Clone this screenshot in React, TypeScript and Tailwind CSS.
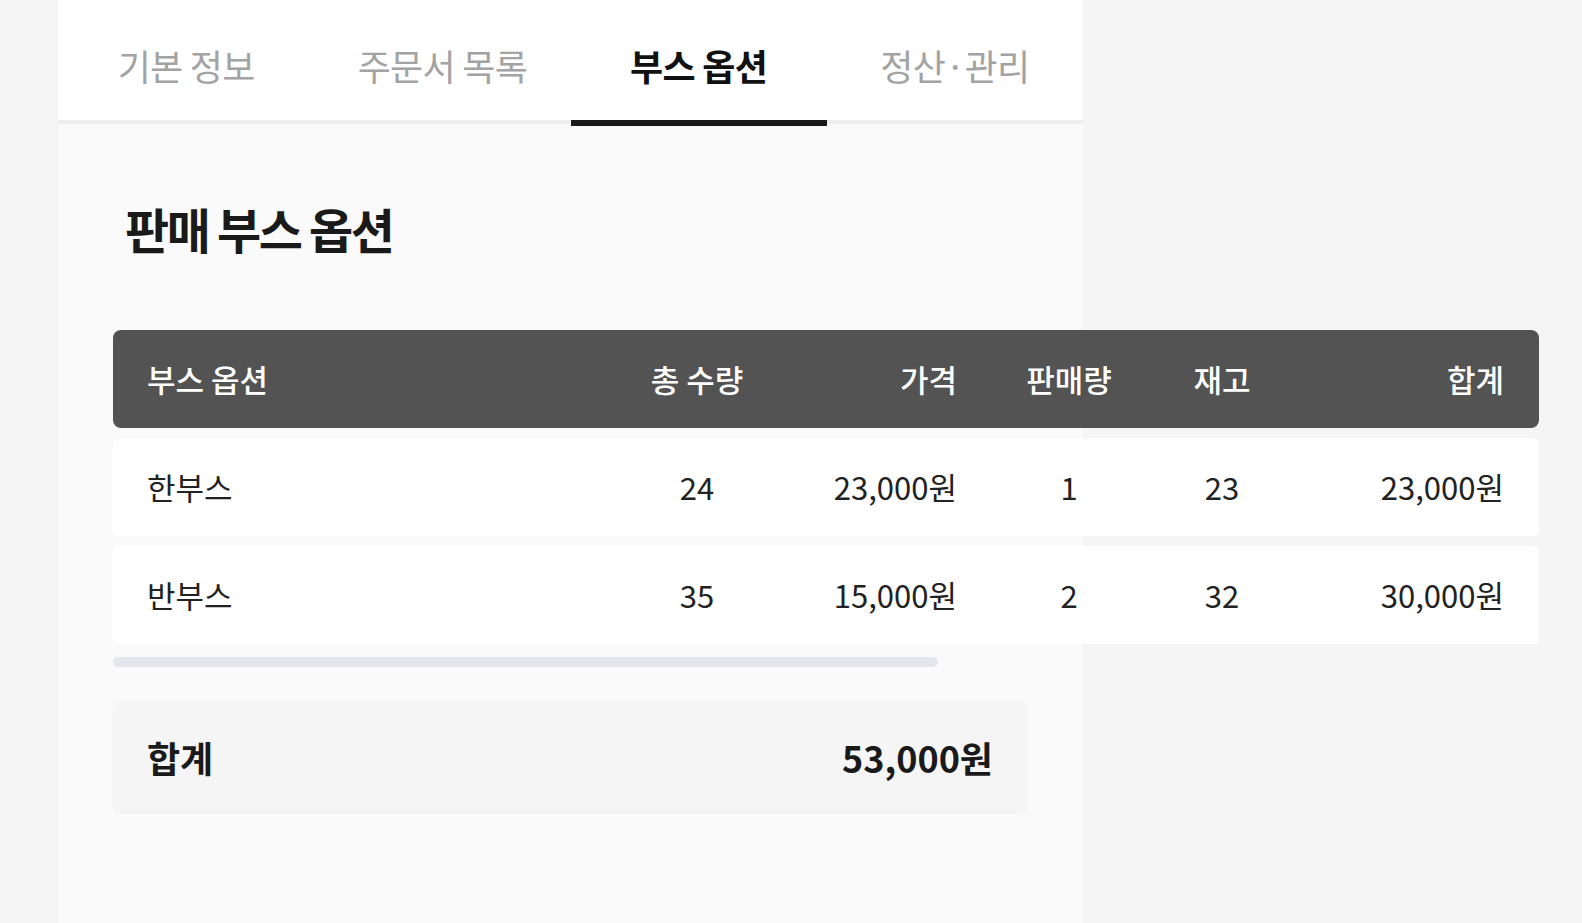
import React from 'react';

const tabs = ['기본 정보', '주문서 목록', '부스 옵션', '정산·관리'];

const rows = [
  { name: '한부스', total: 24, price: '23,000원', sold: 1, stock: 23, sum: '23,000원' },
  { name: '반부스', total: 35, price: '15,000원', sold: 2, stock: 32, sum: '30,000원' },
];

const gridCols = 'grid grid-cols-[470px_160px_180px_224px_82px_1fr] items-center';

const App: React.FC = () => (
  <div className="min-h-screen bg-[#f5f5f5] font-['Noto_Sans_CJK_KR',sans-serif]">
    <div className="ml-[58px] w-[1025px] min-h-screen bg-[#fafafa]">
      <nav className="flex bg-white border-b-4 border-[#ededed]">
        {tabs.map((t, i) => (
          <div
            key={t}
            className={`relative flex-1 h-[120px] flex items-center justify-center pt-[10px] text-[36px] tracking-[-0.02em] ${
              i === 2 ? 'font-bold text-[#111]' : 'text-[#a3a3a3]'
            }`}
          >
            {t}
            {i === 2 && <span className="absolute left-0 right-0 bottom-[-6px] h-[6px] bg-[#1a1a1a]" />}
          </div>
        ))}
      </nav>

      <div className="px-[55px] pt-[75px] pb-[40px]">
        <h2 className="ml-[12px] text-[48px] leading-[58px] font-bold tracking-[-0.05em] text-[#1a1a1a]">
          판매 부스 옵션
        </h2>

        <div className="mt-[73px] w-[1426px] flex flex-col gap-[10px]">
          <div className={`${gridCols} h-[98px] rounded-[8px] bg-[#535353] pl-[34px] pr-[35px] text-[31px] font-medium text-white`}>
            <span>부스 옵션</span>
            <span className="text-center">총 수량</span>
            <span className="text-right">가격</span>
            <span className="text-center">판매량</span>
            <span className="text-center">재고</span>
            <span className="text-right">합계</span>
          </div>
          {rows.map((r) => (
            <div
              key={r.name}
              className={`${gridCols} h-[98px] rounded-[6px] bg-white pl-[34px] pr-[35px] text-[31px] text-[#222]`}
            >
              <span>{r.name}</span>
              <span className="text-center">{r.total}</span>
              <span className="text-right">{r.price}</span>
              <span className="text-center">{r.sold}</span>
              <span className="text-center">{r.stock}</span>
              <span className="text-right">{r.sum}</span>
            </div>
          ))}
        </div>

        <div className="mt-[13px] h-[10px] w-[825px] rounded-full bg-[#e3e6ea]" />

        <div className="mt-[33px] w-[915px] h-[114px] rounded-[8px] bg-[#f5f5f5] pl-[34px] pr-[35px] flex items-center justify-between text-[36px] font-bold text-[#1a1a1a]">
          <span>합계</span>
          <span>53,000원</span>
        </div>
      </div>
    </div>
  </div>
);

export default App;
